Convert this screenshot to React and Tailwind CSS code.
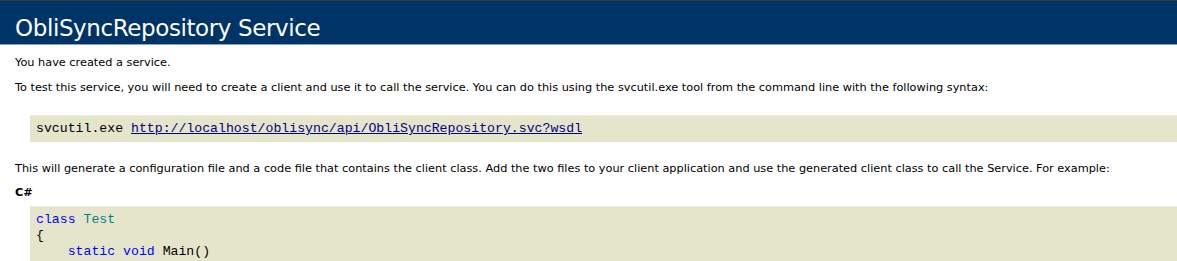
export default function App() {
  const body = { fontFamily: "Verdana, 'DejaVu Sans', sans-serif" };
  const mono = { fontFamily: "'Liberation Mono', 'Courier New', monospace" };

  return (
    <div className="w-[1177px] h-[261px] overflow-hidden bg-white text-black" style={body}>
      <div className="h-[45px] bg-[#003366] border-t border-t-[#3a3a3a] border-b border-b-[#8fa6c2] pl-[15px] pt-[16px]">
        <h1 className="text-[23px] leading-none tracking-[-0.4px] text-white font-normal">ObliSyncRepository Service</h1>
      </div>

      <div className="pl-[15px] text-[11.3px] leading-[16px]">
        <p className="mt-[10px]">You have created a service.</p>
        <p className="mt-[9px]">
          To test this service, you will need to create a client and use it to call the service. You can do this using the svcutil.exe tool from the command line with the following syntax:
        </p>
      </div>

      <pre className="ml-[30px] mt-[19px] bg-[#e5e5cc] border-t border-t-[#eeeedd] pl-[6px] pt-[5px] pb-[5px] text-[13.2px] leading-[16px]" style={mono}>
        svcutil.exe{" "}
        <a href="#" className="text-[#000080] underline">
          http://localhost/oblisync/api/ObliSyncRepository.svc?wsdl
        </a>
      </pre>

      <div className="pl-[15px] text-[11.3px] leading-[16px]">
        <p className="mt-[19px]">
          This will generate a configuration file and a code file that contains the client class. Add the two files to your client application and use the generated client class to call the Service. For example:
        </p>
        <p className="mt-[8px] font-bold">C#</p>
      </div>

      <pre className="ml-[30px] mt-[5px] h-[60px] bg-[#e5e5cc] border-t border-t-[#eeeedd] pl-[6px] pt-[5px] text-[13.2px] leading-[16px]" style={mono}>
        <span className="text-[#0000ff]">class</span> <span className="text-[#008080]">Test</span>
        {"\n{\n    "}
        <span className="text-[#0000ff]">static</span> <span className="text-[#0000ff]">void</span> Main()
      </pre>
    </div>
  );
}
